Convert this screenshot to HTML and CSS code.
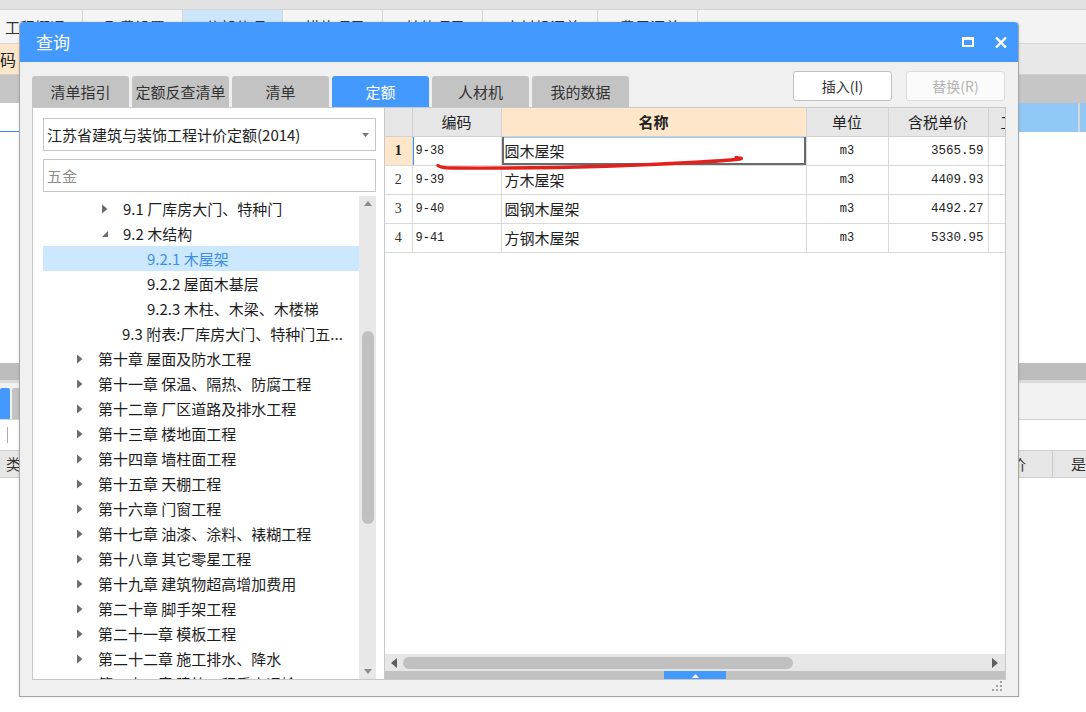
FILE: index.html
```html
<!DOCTYPE html>
<html lang="zh-CN">
<head>
<meta charset="utf-8">
<title>查询</title>
<link rel="stylesheet" href="styles.css">
</head>
<body>
<div class="app">
  <div class="bg-top"></div>
  <div class="bg-tabs">
    <div class="bg-tab t1">工程概况</div>
    <div class="bg-tab">取费设置</div>
    <div class="bg-tab on">分部分项</div>
    <div class="bg-tab">措施项目</div>
    <div class="bg-tab">其他项目</div>
    <div class="bg-tab wide">人材机汇总</div>
    <div class="bg-tab">费用汇总</div>
  </div>
  <div class="bg-head">
    <div class="bg-peach">码</div>
    <div class="bg-fill"></div>
    <div class="bg-cat">汇总类别</div>
    <div class="bg-fill"></div>
  </div>
  <div class="bg-grayrow"></div>
  <div class="bg-selrow">
    <div class="bg-selleft"></div>
    <div class="bg-fill"></div>
    <div class="bg-selright"></div>
    <div class="bg-selend"></div>
  </div>
  <div class="bg-blank"></div>
  <div class="bg-split"></div>
  <div class="bg-tabs2"><div class="bg-tab2 on"></div><div class="bg-tab2"></div></div>
  <div class="bg-input"><span class="caret"></span></div>
  <div class="bg-head2">
    <div class="h2 first">类别</div>
    <div class="bg-fill"></div>
    <div class="h2 prev">单价</div>
    <div class="h2 last">是否暂估</div>
  </div>
</div>

<div class="dialog">
  <div class="titlebar">
    <span class="title">查询</span>
    <div class="tb-icons">
      <svg class="ic-max" width="12" height="10" viewBox="0 0 12 10"><rect x="1" y="1.5" width="10" height="7.5" fill="none" stroke="#fff" stroke-width="2"/><rect x="0" y="0" width="12" height="3" fill="#fff"/></svg>
      <svg class="ic-close" width="12" height="11" viewBox="0 0 12 11"><path d="M1 0.5 L11 10.5 M11 0.5 L1 10.5" stroke="#fff" stroke-width="2.4"/></svg>
    </div>
  </div>
  <div class="dbody">
    <div class="toolrow">
      <div class="tabs">
        <div class="tab">清单指引</div>
        <div class="tab">定额反查清单</div>
        <div class="tab">清单</div>
        <div class="tab active">定额</div>
        <div class="tab">人材机</div>
        <div class="tab">我的数据</div>
      </div>
      <div class="btns">
        <button class="btn">插入(I)</button>
        <button class="btn off" disabled>替换(R)</button>
      </div>
    </div>
    <div class="main">
      <div class="left">
        <div class="select">
          <span>江苏省建筑与装饰工程计价定额(2014)</span>
          <svg class="sel-arrow" width="7" height="4" viewBox="0 0 7 4"><polygon points="0,0 7,0 3.5,4" fill="#777"/></svg>
        </div>
        <div class="search">五金</div>
        <div class="tree">
          <div class="tree-list">
            <div class="row l2"><svg class="ar" width="6" height="10" viewBox="0 0 6 10"><polygon points="0,0.5 5.5,5 0,9.5" fill="#6c6c6c"/></svg><span>9.1 厂库房大门、特种门</span></div>
            <div class="row l2"><svg class="ar" width="6" height="10" viewBox="0 0 6 10"><polygon points="6,2 6,8 0,8" fill="#6c6c6c"/></svg><span>9.2 木结构</span></div>
            <div class="row l3 sel"><span>9.2.1 木屋架</span></div>
            <div class="row l3"><span>9.2.2 屋面木基层</span></div>
            <div class="row l3"><span>9.2.3 木柱、木梁、木楼梯</span></div>
            <div class="row l2 noar"><span>9.3 附表:厂库房大门、特种门五...</span></div>
            <div class="row l1"><svg class="ar" width="6" height="10" viewBox="0 0 6 10"><polygon points="0,0.5 5.5,5 0,9.5" fill="#6c6c6c"/></svg><span>第十章 屋面及防水工程</span></div>
            <div class="row l1"><svg class="ar" width="6" height="10" viewBox="0 0 6 10"><polygon points="0,0.5 5.5,5 0,9.5" fill="#6c6c6c"/></svg><span>第十一章 保温、隔热、防腐工程</span></div>
            <div class="row l1"><svg class="ar" width="6" height="10" viewBox="0 0 6 10"><polygon points="0,0.5 5.5,5 0,9.5" fill="#6c6c6c"/></svg><span>第十二章 厂区道路及排水工程</span></div>
            <div class="row l1"><svg class="ar" width="6" height="10" viewBox="0 0 6 10"><polygon points="0,0.5 5.5,5 0,9.5" fill="#6c6c6c"/></svg><span>第十三章 楼地面工程</span></div>
            <div class="row l1"><svg class="ar" width="6" height="10" viewBox="0 0 6 10"><polygon points="0,0.5 5.5,5 0,9.5" fill="#6c6c6c"/></svg><span>第十四章 墙柱面工程</span></div>
            <div class="row l1"><svg class="ar" width="6" height="10" viewBox="0 0 6 10"><polygon points="0,0.5 5.5,5 0,9.5" fill="#6c6c6c"/></svg><span>第十五章 天棚工程</span></div>
            <div class="row l1"><svg class="ar" width="6" height="10" viewBox="0 0 6 10"><polygon points="0,0.5 5.5,5 0,9.5" fill="#6c6c6c"/></svg><span>第十六章 门窗工程</span></div>
            <div class="row l1"><svg class="ar" width="6" height="10" viewBox="0 0 6 10"><polygon points="0,0.5 5.5,5 0,9.5" fill="#6c6c6c"/></svg><span>第十七章 油漆、涂料、裱糊工程</span></div>
            <div class="row l1"><svg class="ar" width="6" height="10" viewBox="0 0 6 10"><polygon points="0,0.5 5.5,5 0,9.5" fill="#6c6c6c"/></svg><span>第十八章 其它零星工程</span></div>
            <div class="row l1"><svg class="ar" width="6" height="10" viewBox="0 0 6 10"><polygon points="0,0.5 5.5,5 0,9.5" fill="#6c6c6c"/></svg><span>第十九章 建筑物超高增加费用</span></div>
            <div class="row l1"><svg class="ar" width="6" height="10" viewBox="0 0 6 10"><polygon points="0,0.5 5.5,5 0,9.5" fill="#6c6c6c"/></svg><span>第二十章 脚手架工程</span></div>
            <div class="row l1"><svg class="ar" width="6" height="10" viewBox="0 0 6 10"><polygon points="0,0.5 5.5,5 0,9.5" fill="#6c6c6c"/></svg><span>第二十一章 模板工程</span></div>
            <div class="row l1"><svg class="ar" width="6" height="10" viewBox="0 0 6 10"><polygon points="0,0.5 5.5,5 0,9.5" fill="#6c6c6c"/></svg><span>第二十二章 施工排水、降水</span></div>
            <div class="row l1"><svg class="ar" width="6" height="10" viewBox="0 0 6 10"><polygon points="0,0.5 5.5,5 0,9.5" fill="#6c6c6c"/></svg><span>第二十三章 建筑工程垂直运输</span></div>
          </div>
          <div class="vscroll">
            <svg class="vs-up" width="8" height="5" viewBox="0 0 8 5"><polygon points="0,5 8,5 4,0" fill="#8a8a8a"/></svg>
            <div class="vs-track"><div class="vs-thumb"></div></div>
            <svg class="vs-down" width="8" height="5" viewBox="0 0 8 5"><polygon points="0,0 8,0 4,5" fill="#8a8a8a"/></svg>
          </div>
        </div>
      </div>
      <div class="grid">
        <div class="grid-body">
          <table class="tbl">
            <colgroup><col class="c-no"><col class="c-code"><col class="c-name"><col class="c-unit"><col class="c-price"><col class="c-more"></colgroup>
            <thead>
              <tr><th></th><th>编码</th><th class="hl">名称</th><th>单位</th><th>含税单价</th><th class="more">工作内容</th></tr>
            </thead>
            <tbody>
              <tr class="cur"><td class="no">1</td><td class="code">9-38</td><td class="name focus">圆木屋架</td><td class="unit">m3</td><td class="price">3565.59</td><td></td></tr>
              <tr><td class="no">2</td><td class="code">9-39</td><td class="name">方木屋架</td><td class="unit">m3</td><td class="price">4409.93</td><td></td></tr>
              <tr><td class="no">3</td><td class="code">9-40</td><td class="name">圆钢木屋架</td><td class="unit">m3</td><td class="price">4492.27</td><td></td></tr>
              <tr><td class="no">4</td><td class="code">9-41</td><td class="name">方钢木屋架</td><td class="unit">m3</td><td class="price">5330.95</td><td></td></tr>
            </tbody>
          </table>
        </div>
        <div class="hscroll">
          <svg class="hs-l" width="6" height="10" viewBox="0 0 6 10"><polygon points="6,0 6,10 0,5" fill="#5e5e5e"/></svg>
          <div class="hs-track"><div class="hs-thumb"></div></div>
          <svg class="hs-r" width="6" height="10" viewBox="0 0 6 10"><polygon points="0,0 0,10 6,5" fill="#5e5e5e"/></svg>
        </div>
        <div class="splitter"><div class="split-handle"><svg width="7" height="4" viewBox="0 0 7 4"><polygon points="0,4 7,4 3.5,0" fill="#fff"/></svg></div></div>
      </div>
    </div>
    <div class="footer">
      <svg class="grip" width="11" height="11" viewBox="0 0 11 11" fill="#a2a2a2"><rect x="8" y="0" width="2" height="2"/><rect x="4" y="4" width="2" height="2"/><rect x="8" y="4" width="2" height="2"/><rect x="0" y="8" width="2" height="2"/><rect x="4" y="8" width="2" height="2"/><rect x="8" y="8" width="2" height="2"/></svg>
    </div>
  </div>
</div>

<svg class="redline" width="320" height="26" viewBox="0 0 320 26"><path d="M6 15.5 Q 9 18 20 18 C 100 18.5 200 16 268 12 S 298 8 305 7.5" fill="none" stroke="#e3211c" stroke-width="3.4" stroke-linecap="round"/></svg>
</body>
</html>
```

FILE: styles.css
```css
* { box-sizing: border-box; }
html, body { margin: 0; padding: 0; }
body {
  width: 1086px;
  height: 712px;
  overflow: hidden;
  position: relative;
  background: #fff;
  font-family: "Noto Sans CJK SC", "Noto Sans", sans-serif;
  color: #222;
}

/* ---------- background application ---------- */
.app { display: flex; flex-direction: column; width: 1086px; height: 712px; }
.bg-fill { flex: 1; }
.bg-top { height: 10px; background: #e2e2e2; border-bottom: 1px solid #d4d4d4; }
.bg-tabs { height: 34px; display: flex; background: #f3f3f3; border-bottom: 1px solid #d8d8d8; }
.bg-tab {
  width: 100px; border-right: 1px solid #d6d6d6; background: #f5f5f5;
  font-size: 15px; line-height: 34px; padding-left: 22px; white-space: nowrap; overflow: hidden; color: #333;
}
.bg-tab.t1 { width: 83px; padding-left: 5px; }
.bg-tab.on { background: #cde6fb; }
.bg-tab.wide { width: 115px; }
.bg-head { height: 31px; display: flex; background: #e8e8e8; border-bottom: 1px solid #cfcfcf; }
.bg-peach { width: 120px; background: #fde6c9; font-size: 16px; line-height: 31px; color: #222; }
.bg-cat { width: 88px; padding-left: 8px; font-size: 15px; line-height: 31px; border-right: 1px solid #cfcfcf; white-space: nowrap; color: #333; }
.bg-grayrow { height: 28px; background: #c6c6c6; }
.bg-selrow { height: 29px; display: flex; }
.bg-selleft { width: 120px; border-bottom: 1px solid #3d8ff0; }
.bg-selright { width: 200px; background: #92c8f6; border-right: 2px solid #d6d6d6; }
.bg-selend { width: 6px; background: #92c8f6; }
.bg-blank { height: 231px; }
.bg-split { height: 20px; background: #bdbdbd; border-bottom: 3px solid #dadada; }
.bg-tabs2 { height: 37px; background: #f2f2f2; display: flex; align-items: flex-end; gap: 2px; border-bottom: 1px solid #d4d4d4; }
.bg-tab2 { width: 10px; height: 31px; background: #c2c2c2; border-radius: 2px 2px 0 0; }
.bg-tab2.on { background: #4499ff; }
.bg-input { height: 30px; position: relative; }
.caret { position: absolute; left: 7px; top: 7px; width: 1px; height: 16px; background: #aaa; }
.bg-head2 { height: 28px; display: flex; background: #e6e6e6; border-top: 1px solid #d0d0d0; border-bottom: 1px solid #d0d0d0; }
.h2 { font-size: 15px; line-height: 26px; color: #333; white-space: nowrap; overflow: hidden; }
.h2.first { width: 120px; padding-left: 6px; }
.h2.prev { width: 93px; text-align: right; padding-right: 26px; border-right: 1px solid #cacaca; }
.h2.last { width: 33px; padding-left: 18px; }

/* ---------- dialog ---------- */
.dialog {
  position: absolute; left: 19px; top: 22px; width: 1000px; height: 675px;
  border: 1px solid #a6a6a6; border-top: 0;
  background: #f0f0f0; display: flex; flex-direction: column;
  border-radius: 4px 4px 0 0;
  box-shadow: 0 0 3px rgba(0,0,0,0.12);
}
.titlebar {
  height: 40px; flex: none; background: #4499ff; border-radius: 4px 4px 0 0;
  display: flex; align-items: center; justify-content: space-between;
  padding: 0 11px 0 16px; color: #fff;
}
.title { font-size: 17px; line-height: 20px; }
.tb-icons { display: flex; align-items: center; gap: 21px; }
.ic-max { margin-top: -1px; }

.dbody { flex: 1; display: flex; flex-direction: column; padding: 0 12px; }
.toolrow { height: 45px; flex: none; display: flex; justify-content: space-between; }
.tabs { display: flex; align-self: flex-end; gap: 3px; }
.tab {
  width: 97px; height: 31px; background: #c3c3c3; border-radius: 3px 3px 0 0;
  font-size: 15px; line-height: 31px; text-align: center; color: #333; white-space: nowrap;
}
.tab.active { background: #4499ff; color: #fff; }
.btns { display: flex; gap: 14px; padding-top: 9px; padding-right: 1px; }
.btn {
  width: 99px; height: 30px; background: #fff; border: 1px solid #c2c2c2; border-radius: 3px;
  font-family: "Noto Sans CJK SC", "Noto Sans", sans-serif; font-size: 14px; color: #333; padding: 0;
}
.btn.off { color: #b4b4b4; border-color: #dcdcdc; background: #fbfbfb; }

.main { height: 573px; flex: none; display: flex; border: 1px solid #c8c8c8; background: #fff; }
.left { width: 351px; flex: none; padding: 10px 8px 0 10px; display: flex; flex-direction: column; }
.select {
  height: 33px; flex: none; border: 1px solid #c6c6c6; display: flex; align-items: center; justify-content: space-between;
  padding: 0 6px 0 3px; font-size: 15px; color: #222;
}
.search {
  height: 33px; flex: none; margin-top: 8px; border: 1px solid #c6c6c6; padding-left: 3px;
  font-size: 15px; line-height: 31px; color: #8c8c8c;
}
.tree { flex: 1; margin-top: 4px; display: flex; min-height: 0; overflow: hidden; }
.tree-list { flex: 1; overflow: hidden; }
.row { height: 25px; display: flex; align-items: center; font-size: 15px; white-space: nowrap; color: #1e1e1e; }
.row .ar { flex: none; margin-right: 15px; }
.row.l1 { padding-left: 34px; }
.row.l2 { padding-left: 59px; }
.row.l2.noar { padding-left: 79px; }
.row.l3 { padding-left: 104px; }
.row.sel { background: #cce8ff; color: #3f8ee6; }
.vscroll { width: 17px; flex: none; background: #e8e8e8; display: flex; flex-direction: column; align-items: center; padding: 5px 0 5px; }
.vs-track { flex: 1; width: 100%; display: flex; flex-direction: column; align-items: center; padding-top: 125px; }
.vs-thumb { width: 12px; height: 193px; border-radius: 6px; background: #c0c0c0; }

.grid { flex: 1; min-width: 0; border-left: 1px solid #c8c8c8; display: flex; flex-direction: column; overflow: hidden; }
.grid-body { flex: 1; overflow: hidden; }
.tbl { border-collapse: collapse; table-layout: fixed; width: 683px; }
.c-no { width: 27px; }
.c-code { width: 89px; }
.c-name { width: 305px; }
.c-unit { width: 82px; }
.c-price { width: 100px; }
.c-more { width: 80px; }
.tbl th {
  height: 28px; background: #e6e6e6; border: 1px solid #d2d2d2; border-top: 0;
  font-size: 15px; font-weight: normal; color: #222; padding: 0; white-space: nowrap; overflow: hidden;
}
.tbl th:first-child { border-left: 0; }
.tbl th.hl { background: #fde6c9; font-weight: bold; }
.tbl th.more { text-align: left; padding-left: 12px; }
.tbl td {
  height: 29px; border: 1px solid #d9d9d9; padding: 0; white-space: nowrap; overflow: hidden;
  font-size: 12px; color: #222;
}
.tbl td:first-child { border-left: 0; }
.tbl td.no { font-family: "Liberation Serif", "DejaVu Serif", serif; font-size: 14px; text-align: center; color: #333; }
.tbl tr.cur td.no { background: #fde6c9; font-weight: bold; color: #222; }
.tbl td.code { font-family: "Liberation Mono", "DejaVu Sans Mono", monospace; padding-left: 3px; }
.tbl tr.cur td.code { box-shadow: inset 1px 0 0 #3d8ff0; }
.tbl td.name { font-size: 15px; padding-left: 3px; font-family: "Noto Sans CJK SC", sans-serif; }
.tbl td.name.focus { box-shadow: inset 2px 0 0 #6a6a6a, inset -2px 0 0 #6a6a6a, inset 0 -2px 0 #6a6a6a, inset 0 1px 0 #9cc7ef; }
.tbl td.unit { font-family: "Liberation Mono", "DejaVu Sans Mono", monospace; text-align: center; }
.tbl td.price { font-family: "Liberation Mono", "DejaVu Sans Mono", monospace; text-align: right; padding-right: 4px; font-size: 12.5px; }

.hscroll { height: 17px; flex: none; background: #e6e6e6; display: flex; align-items: center; padding: 0 7px 0 6px; }
.hs-track { flex: 1; height: 12px; padding-left: 6px; }
.hs-thumb { width: 390px; height: 12px; border-radius: 6px; background: #c0c0c0; }
.splitter { height: 8px; flex: none; background: #c2c2c2; padding-left: 279px; }
.split-handle { width: 62px; height: 8px; background: #4499ff; display: flex; justify-content: center; align-items: center; padding-top: 1px; }

.footer { flex: 1; display: flex; justify-content: flex-end; align-items: flex-start; padding: 1px 3px 0 0; }

.redline { position: absolute; left: 432px; top: 150px; }
```
